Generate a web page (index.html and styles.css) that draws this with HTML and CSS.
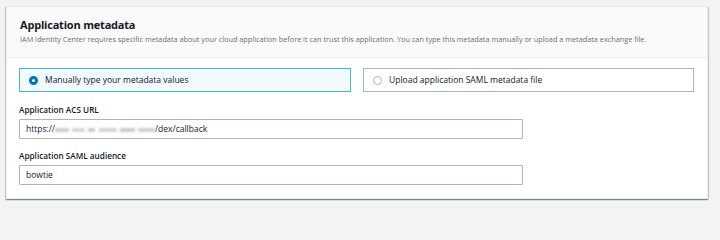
FILE: index.html
```html
<!DOCTYPE html>
<html>
<head>
<meta charset="utf-8">
<link rel="stylesheet" href="styles.css">
</head>
<body>
<div class="page">
  <section class="card">
    <header class="card-header">
      <h2 class="title">Application metadata</h2>
      <p class="desc">IAM Identity Center requires specific metadata about your cloud application before it can trust this application. You can type this metadata manually or upload a metadata exchange file.</p>
    </header>
    <div class="card-body">
      <div class="tiles">
        <label class="tile tile-on"><span class="radio radio-on"></span><span class="tile-text">Manually type your metadata values</span></label>
        <label class="tile"><span class="radio"></span><span class="tile-text">Upload application SAML metadata file</span></label>
      </div>
      <div class="field">
        <div class="field-label">Application ACS URL</div>
        <div class="input"><span>https://</span><span class="blur" aria-hidden="true"></span><span>/dex/callback</span></div>
      </div>
      <div class="field">
        <div class="field-label">Application SAML audience</div>
        <div class="input"><span>bowtie</span></div>
      </div>
    </div>
  </section>
</div>
</body>
</html>
```
FILE: styles.css
```css
html, body {
  margin: 0;
  padding: 0;
  background: #f2f3f3;
}
body {
  font-family: "Open Sans", "Noto Sans", sans-serif;
  color: #16191f;
}
.page {
  padding: 6px 12px 4px 6px;
}
.card {
  background: #ffffff;
  border: 1px solid #eaeded;
  border-top-color: #e4e7e7;
  box-shadow: 0 1px 1px 0 rgba(0, 28, 36, 0.3), 1px 1px 1px 0 rgba(0, 28, 36, 0.15), -1px 1px 1px 0 rgba(0, 28, 36, 0.15);
}
.card-header {
  background: #fafafa;
  border-bottom: 1px solid #eaeded;
  height: 51px;
  padding: 11px 13px 0;
  box-sizing: border-box;
}
.title {
  margin: 0;
  font-size: 11px;
  line-height: 14px;
  font-weight: 700;
  letter-spacing: -0.2px;
}
.desc {
  margin: 2px 0 0;
  font-size: 7.3px;
  line-height: 10px;
  color: #687078;
  white-space: nowrap;
}
.card-body {
  padding: 10px 13px 13px 12px;
}
.tiles {
  display: grid;
  grid-template-columns: 332px 331px;
  column-gap: 12px;
}
.tile {
  display: flex;
  align-items: center;
  height: 24px;
  box-sizing: border-box;
  border: 1px solid #aab7b8;
  background: #ffffff;
  padding-left: 9px;
}
.tile-on {
  border-color: #44b9d6;
  background: #f1faff;
}
.radio {
  width: 9px;
  height: 9px;
  border-radius: 50%;
  border: 1px solid #aab7b8;
  box-sizing: border-box;
  background: #fff;
  flex: none;
}
.radio-on {
  border: 3px solid #0073bb;
}
.tile-text {
  margin-left: 7px;
  font-size: 8.5px;
  line-height: 12px;
}
.field {
  margin-top: 12px;
  width: 504px;
}
.field + .field {
  margin-top: 11px;
}
.field-label {
  font-size: 8.2px;
  line-height: 11px;
  font-weight: 600;
  margin-bottom: 4px;
}
.input {
  display: flex;
  align-items: center;
  height: 20px;
  box-sizing: border-box;
  border: 1px solid #aab7b8;
  border-radius: 1px;
  padding: 0 6px;
  font-size: 8.5px;
  line-height: 18px;
  white-space: nowrap;
}
.blur {
  display: block;
  width: 100px;
  height: 4px;
  margin-top: 1px;
  flex: none;
  background:
    linear-gradient(90deg,
      #c9cfd2 0 14px, transparent 14px 17px,
      #d3d8da 17px 30px, transparent 30px 33px,
      #c4cacd 33px 40px, transparent 40px 44px,
      #d0d5d8 44px 62px, transparent 62px 65px,
      #c6ccd0 65px 80px, transparent 80px 83px,
      #cdd2d5 83px 100px);
  filter: blur(0.8px);
}
```
